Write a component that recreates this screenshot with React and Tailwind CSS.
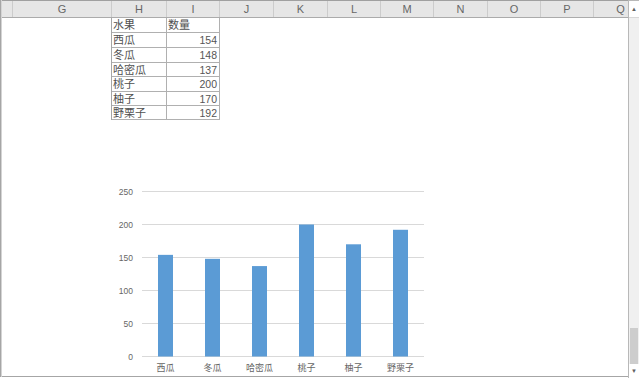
import React from 'react';

const cols = [
  { name: '', w: 'w-[11px]' },
  { name: 'G', w: 'w-[99px]' },
  { name: 'H', w: 'w-[55px]' },
  { name: 'I', w: 'w-[53px]' },
  { name: 'J', w: 'w-[54px]' },
  { name: 'K', w: 'w-[54px]' },
  { name: 'L', w: 'w-[53px]' },
  { name: 'M', w: 'w-[53px]' },
  { name: 'N', w: 'w-[54px]' },
  { name: 'O', w: 'w-[53px]' },
  { name: 'P', w: 'w-[53px]' },
  { name: 'Q', w: 'w-[54px]' },
];

const fruits = [
  { name: '西瓜', qty: 154, h: 'h-[15px]' },
  { name: '冬瓜', qty: 148, h: 'h-[15px]' },
  { name: '哈密瓜', qty: 137, h: 'h-[14px]' },
  { name: '桃子', qty: 200, h: 'h-[15px]' },
  { name: '柚子', qty: 170, h: 'h-[14px]' },
  { name: '野栗子', qty: 192, h: 'h-[14px]' },
];

function Chart() {
  const zero = 176.5;
  const scale = 0.66;
  const ticks = [250, 200, 150, 100, 50, 0];
  return (
    <svg width="340" height="196" className="block">
      {ticks.map(t => {
        const y = zero - t * scale;
        return (
          <g key={t}>
            <line x1="42" x2="324" y1={y} y2={y} stroke="#d9d9d9" strokeWidth="1" />
            <text x="33" y={y + 3} textAnchor="end" fontSize="8.5" fill="#666"
              fontFamily="'Liberation Sans', Arial, sans-serif">{t}</text>
          </g>
        );
      })}
      {fruits.map((f, i) => {
        const h = f.qty * scale;
        return (
          <g key={f.name}>
            <rect x={58 + 47 * i} y={zero - h} width="15" height={h} fill="#5b9bd5" />
            <text x={65.5 + 47 * i} y="191" textAnchor="middle" fontSize="9" fill="#666"
              fontFamily="'Noto Sans CJK SC', sans-serif">{f.name}</text>
          </g>
        );
      })}
    </svg>
  );
}

export default function App() {
  return (
    <div className="flex w-[639px] h-[378px] bg-white overflow-hidden font-['Liberation_Sans','Noto_Sans_CJK_SC',sans-serif]">
      {/* sheet frame edge */}
      <div className="w-[2px] h-[377px] bg-[#a6a6a6] border-r border-[#d4d4d4]" />

      <div className="flex flex-col w-[626px] h-[377px] overflow-hidden border-b border-[#a6a6a6]">
        <div className="flex shrink-0 h-[18px] border-t border-b border-t-[#a0a0a0] border-b-[#ababab] bg-[#e6e6e6]">
          {cols.map(c => (
            <div key={c.name || 'f'}
              className={`${c.w} shrink-0 h-full flex items-center justify-center border-r border-[#cccccc] text-[11px] text-[#666] leading-none`}>
              {c.name}
            </div>
          ))}
        </div>

        <div className="flex flex-col">
          <div className="ml-[109px] w-[109px] border-l border-[#a6a6a6] text-[#505050]">
            <div className="flex h-[15px] border-b border-[#b0b0b0]">
              <div className="w-[55px] border-r border-[#b0b0b0] pl-[1px] text-[11px] leading-[14px]">水果</div>
              <div className="w-[53px] border-r border-[#b0b0b0] pl-[1px] text-[11px] leading-[14px]">数量</div>
            </div>
            {fruits.map(f => (
              <div key={f.name} className={`flex ${f.h} border-b border-[#b0b0b0]`}>
                <div className="w-[55px] border-r border-[#b0b0b0] pl-[1px] text-[11px] leading-[14px]">{f.name}</div>
                <div className="w-[53px] border-r border-[#b0b0b0] pr-[2px] text-right text-[10.5px] leading-[14px] text-[#555]">{f.qty}</div>
              </div>
            ))}
          </div>

          <div className="ml-[98px] mt-[60px]">
            <Chart />
          </div>
        </div>
      </div>

      {/* vertical scrollbar */}
      <div className="flex flex-col w-[11px] h-[378px] border-t border-l border-[#b8b8b8] bg-[#f0f0f0]">
        <div className="h-[17px] flex items-center justify-center bg-white border-b border-[#d8d8d8] text-[6px] text-[#606060] leading-none">▲</div>
        <div className="flex-1" />
        <div className="h-[36px] mx-[1px] bg-[#cdcdcd]" />
        <div className="h-[14px] flex items-center justify-center bg-white text-[6px] text-[#606060] leading-none">▼</div>
      </div>
    </div>
  );
}
